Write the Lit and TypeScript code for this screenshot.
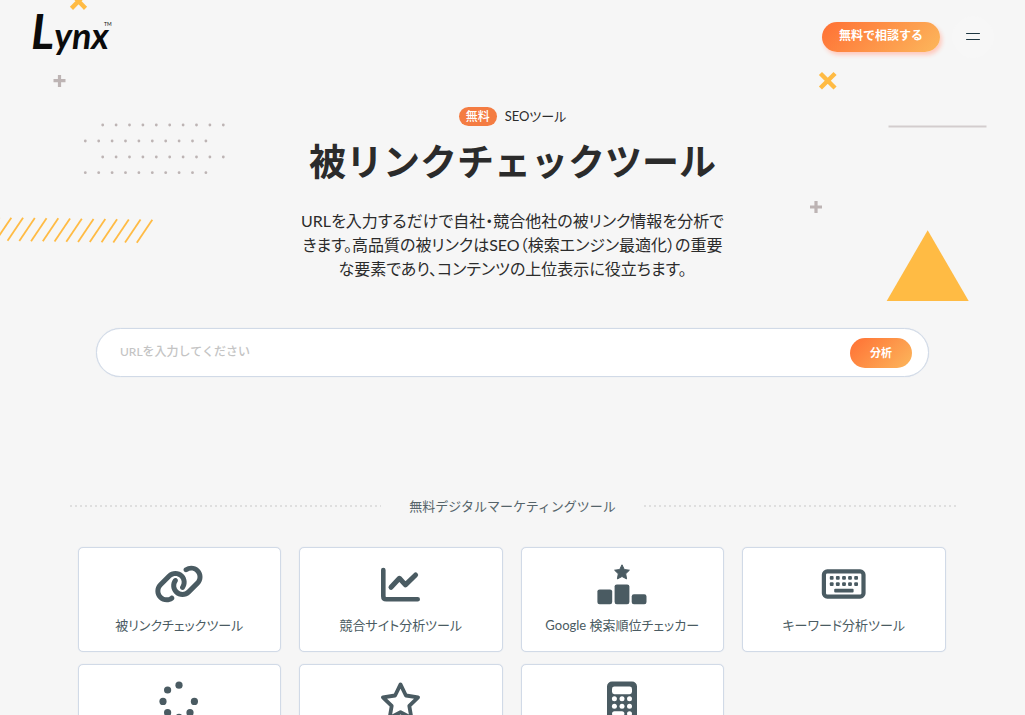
import { LitElement, html, css, svg } from "lit";
import { customElement } from "lit/decorators.js";

const icons = {
  link: svg`<path transform="translate(3 4) scale(0.078)" d="M579.8 267.7c56.5-56.5 56.5-148 0-204.5c-50-50-128.8-56.5-186.3-15.4l-1.6 1.1c-14.4 10.3-17.7 30.3-7.4 44.6s30.3 17.7 44.6 7.4l1.6-1.1c32.1-22.9 76-19.3 103.8 8.6c31.5 31.5 31.5 82.5 0 114L422.3 334.8c-31.5 31.5-82.5 31.5-114 0c-27.9-27.9-31.5-71.8-8.6-103.8l1.1-1.6c10.3-14.4 6.9-34.4-7.4-44.6s-34.4-6.9-44.6 7.4l-1.1 1.6C206.5 251.2 213 330 263 380c56.5 56.5 148 56.5 204.5 0L579.8 267.7zM60.2 244.3c-56.5 56.5-56.5 148 0 204.5c50 50 128.8 56.5 186.3 15.4l1.6-1.1c14.4-10.3 17.7-30.3 7.4-44.6s-30.3-17.7-44.6-7.4l-1.6 1.1c-32.1 22.9-76 19.3-103.8-8.6C74 372 74 321 105.5 289.5L217.7 177.2c31.5-31.5 82.5-31.5 114 0c27.9 27.9 31.5 71.8 8.6 103.9l-1.1 1.6c-10.3 14.4-6.9 34.4 7.4 44.6s34.4 6.9 44.6-7.4l1.1-1.6C433.5 260.8 427 182 377 132c-56.5-56.5-148-56.5-204.5 0L60.2 244.3z"/>`,
  chart: svg`<g fill="none" stroke="currentColor" stroke-linecap="round" stroke-linejoin="round"><path stroke-width="4.6" d="M10.3 10v26.2q0 3 3 3h31.4"/><path stroke-width="5" d="M18 27.3l8.4-9 6 6.6L42.6 15"/></g>`,
  ranking: svg`<path d="M28 4.8l2.3 4.7 5.1.7-3.7 3.6.9 5.1-4.6-2.4-4.6 2.4.9-5.1-3.7-3.6 5.1-.7z" stroke="currentColor" stroke-linejoin="round"/><rect x="3.4" y="29.4" width="14.8" height="14.8" rx="2.2"/><rect x="20.6" y="24.4" width="14.8" height="19.8" rx="2.2"/><rect x="37.7" y="34.3" width="14.8" height="9.9" rx="2.2"/>`,
  keyboard: svg`<rect x="7.9" y="11.4" width="39.6" height="25.2" rx="3.4" fill="none" stroke="currentColor" stroke-width="4.2"/>${[14, 20.1, 26.3, 32.3, 38.4].map(
    (x) => svg`<rect x=${x - 0.2} y="16" width="3.8" height="3.8" rx="1"/><rect x=${x - 0.2} y="22.2" width="3.8" height="3.8" rx="1"/>`
  )}<rect x="18.2" y="28.8" width="19.4" height="3.8" rx="1"/>`,
  spinner: svg`${[[28, 8.2], [16.6, 13], [12, 24.4], [43.4, 24.4], [16.6, 35.7], [39, 35.7], [28, 40.4]].map(
    ([x, y]) => svg`<circle cx=${x} cy=${y} r="3.6"/>`
  )}`,
  star: svg`<path fill="none" stroke="currentColor" stroke-width="3.8" stroke-linejoin="round" d="M27.5 7.4l5.4 11.1 12.2 1.8-8.8 8.6 2.1 12.1-10.9-5.8-10.9 5.8 2.1-12.1-8.8-8.6 12.2-1.8z"/>`,
  calculator: svg`<path fill-rule="evenodd" d="M18 4.6h20a5 5 0 0 1 5 5v30a5 5 0 0 1-5 5H18a5 5 0 0 1-5-5v-30a5 5 0 0 1 5-5zM20.4 9.6a2.4 2.4 0 0 0-2.4 2.4v2.8a2.4 2.4 0 0 0 2.4 2.4h15.2a2.4 2.4 0 0 0 2.4-2.4V12a2.4 2.4 0 0 0-2.4-2.4z"/><g fill="#fff">${[20.4, 28, 35.5].map(
    (x) => svg`<circle cx=${x} cy="21.8" r="2.5"/><circle cx=${x} cy="29.2" r="2.5"/>`
  )}<rect x="18" y="34.2" width="12.4" height="5" rx="2.5"/><circle cx="35.5" cy="36.7" r="2.5"/></g>`,
};

const tools = [
  { label: "被リンクチェックツール", icon: icons.link },
  { label: "競合サイト分析ツール", icon: icons.chart },
  { label: "Google 検索順位チェッカー", icon: icons.ranking },
  { label: "キーワード分析ツール", icon: icons.keyboard },
  { label: "サイト速度チェッカー", icon: icons.spinner },
  { label: "SEOスコアチェッカー", icon: icons.star },
  { label: "広告費用計算ツール", icon: icons.calculator },
];

@customElement("tool-card")
export class ToolCard extends LitElement {
  static properties = { label: {}, icon: { attribute: false } };
  declare label: string;
  declare icon: unknown;

  static styles = css`
    :host { display: block; }
    .card {
      display: flex;
      flex-direction: column;
      align-items: center;
      gap: 7px;
      box-sizing: border-box;
      padding: 12px 8px 16px;
      border: 1px solid #d1dae7;
      border-radius: 5px;
      background: #fff;
      box-shadow: 0 0 1px #d1dae7;
      color: #4a5b62;
      text-decoration: none;
    }
    .icon { width: 56px; height: 48px; fill: currentColor; }
    .label { font-size: 13px; line-height: 20px; text-align: center; }
  `;

  render() {
    return html`<a class="card" href="#">
      <svg class="icon" viewBox="0 0 56 48" aria-hidden="true">${this.icon}</svg>
      <span class="label">${this.label}</span>
    </a>`;
  }
}

@customElement("hero-shapes")
export class HeroShapes extends LitElement {
  static styles = css`
    :host { position: absolute; inset: 0; overflow: hidden; pointer-events: none; }
    .left, .right { position: absolute; top: 0; width: 260px; height: 320px; }
    .left { left: 0; }
    .right { right: 0; }
  `;

  render() {
    const rows = [125, 141, 157, 172.7];
    const cols = Array.from({ length: 10 }, (_, i) => i * 13.4);
    const stripes = Array.from({ length: 14 }, (_, i) => i);
    return html`
      <svg class="left" viewBox="0 0 260 320" aria-hidden="true">
        <path d="M73-4.5l11 11.3M84-4.5L73 6.8" stroke="#ffbb44" stroke-width="4.4" stroke-linecap="square" />
        <path d="M59.5 75v12M53.5 80.7h12" stroke="#bdb4b4" stroke-width="3.2" />
        ${rows.map((y, r) =>
          cols.map((x) => svg`<circle cx=${x + (r % 2 ? 85.3 : 102.7)} cy=${y} r="1.4" fill="#bdb4b4"/>`)
        )}
        ${stripes.map(
          (i) => svg`<path d="M${152.3 - i * 11.75} ${219.8 - i * 0.18}l-15.5 23" stroke="#ffbb44" stroke-width="1.8"/>`
        )}
      </svg>
      <svg class="right" viewBox="0 0 260 320" aria-hidden="true">
        <path d="M57 75l11.5 11.5M68.5 75L57 86.500" stroke="#ffbb44" stroke-width="4.4" stroke-linecap="square" />
        <path d="M123.5 126.5h98" stroke="#d3cdce" stroke-width="2" />
        <path d="M51 201v12M45 207h12" stroke="#bdb4b4" stroke-width="3.2" />
        <path d="M162.7 230.3L203.7 301H121.7z" fill="#ffbb44" />
      </svg>
    `;
  }
}

@customElement("app-root")
export class AppRoot extends LitElement {
  static styles = css`
    :host {
      display: block;
      position: relative;
      min-height: 100vh;
      background: #f6f6f6;
      color: #2b2b2b;
      font-family: Lato, "Noto Sans CJK JP", sans-serif;
      font-feature-settings: "palt";
    }
    button, input { font-family: inherit; }
    header {
      position: relative;
      display: flex;
      align-items: center;
      gap: 12px;
      height: 73px;
      padding: 0 31px;
    }
    .logo { margin-right: auto; }
    .logo svg { display: block; width: 90px; height: 73px; fill: #0b0b0b; font-style: italic; font-weight: 700; }
    .logo-cap { font-size: 48px; }
    .logo-low { font-size: 36px; }
    .logo-mark { font-size: 5px; font-style: normal; font-weight: 400; }
    .cta, .submit {
      border: 0;
      color: #fff;
      background: linear-gradient(135deg, #ff7034, #fcb75c);
      font-weight: 700;
      cursor: pointer;
    }
    .cta {
      height: 30px;
      padding: 0 17px 2px;
      border-radius: 15px;
      font-size: 12px;
      line-height: 20px;
      box-shadow: 2px 3px 4px #ffc9bd;
    }
    .menu {
      display: flex;
      flex-direction: column;
      align-items: center;
      justify-content: center;
      gap: 5px;
      width: 42px;
      height: 42px;
      padding: 0;
      border: 0;
      border-radius: 50%;
      background: #f7f7f7;
    }
    .menu span { width: 14px; height: 1px; border-radius: 1px; background: #1d3540; }
    main { position: relative; padding: 33px 24px 24px; }
    .hero { display: flex; flex-direction: column; align-items: center; text-align: center; }
    .eyebrow { display: flex; align-items: center; gap: 8px; margin: 0; font-size: 13px; line-height: 21px; }
    .badge {
      padding: 0 7px;
      border-radius: 10px;
      background: #f47c42;
      color: #fff;
      font-size: 12px;
      line-height: 19px;
      font-weight: 500;
    }
    h1 {
      margin: 11px 0 0;
      font-size: 37px;
      line-height: 48px;
      font-weight: 700;
      font-feature-settings: normal;
    }
    .lead { max-width: 424px; margin: 23px 0 0; font-size: 16px; line-height: 24px; }
    .search {
      display: flex;
      align-items: center;
      box-sizing: border-box;
      width: 100%;
      max-width: 833px;
      height: 49px;
      margin-top: 47px;
      padding: 0 16px 0 23px;
      border: 1px solid #d1dae7;
      border-radius: 25px;
      background: #fff;
      box-shadow: 0 0 1px #d1dae7;
    }
    .search input {
      flex: 1;
      min-width: 0;
      padding: 0 0 1px;
      border: 0;
      outline: 0;
      background: none;
      font-size: 12px;
      line-height: 20px;
    }
    .search input::placeholder { color: #c4c4c4; font-weight: 500; opacity: 1; }
    .submit { width: 62px; height: 30px; padding: 0 0 1px; border-radius: 15px; font-size: 11px; }
    .tools { max-width: 886px; margin: 119px auto 0; }
    .heading { display: flex; align-items: center; gap: 28px; }
    .heading::before, .heading::after {
      content: "";
      flex: 1;
      height: 2px;
      background: linear-gradient(90deg, #dfdfdf 2px, transparent 2px) 0 0 / 5px 2px;
    }
    h2 {
      margin: 0;
      color: #55646a;
      font-size: 13px;
      line-height: 20px;
      font-weight: 400;
      font-feature-settings: normal;
    }
    .grid {
      display: grid;
      grid-template-columns: repeat(4, 1fr);
      gap: 12px 18px;
      margin-top: 31px;
      padding: 0 10px 0 8px;
    }
    @media (max-width: 720px) {
      .grid { grid-template-columns: repeat(2, 1fr); }
    }
  `;

  render() {
    return html`
      <hero-shapes></hero-shapes>
      <header>
        <a class="logo" href="#" aria-label="Lynx">
          <svg viewBox="0 0 90 73">
            <text x="0" y="49"><tspan class="logo-cap">L</tspan><tspan class="logo-low">ynx</tspan></text>
            <text class="logo-mark" x="73" y="26">TM</text>
          </svg>
        </a>
        <button class="cta" type="button">無料で相談する</button>
        <button class="menu" type="button" aria-label="メニュー"><span></span><span></span></button>
      </header>
      <main>
        <section class="hero">
          <p class="eyebrow"><span class="badge">無料</span><span>SEOツール</span></p>
          <h1>被リンクチェックツール</h1>
          <p class="lead">URLを入力するだけで自社・競合他社の被リンク情報を分析できます。高品質の被リンクはSEO（検索エンジン最適化）の重要な要素であり、コンテンツの上位表示に役立ちます。</p>
          <form class="search" @submit=${(e: Event) => e.preventDefault()}>
            <input type="text" aria-label="URL" placeholder="URLを入力してください" />
            <button class="submit" type="submit">分析</button>
          </form>
        </section>
        <section class="tools">
          <div class="heading"><h2>無料デジタルマーケティングツール</h2></div>
          <div class="grid">
            ${tools.map((t) => html`<tool-card .label=${t.label} .icon=${t.icon}></tool-card>`)}
          </div>
        </section>
      </main>
    `;
  }
}
